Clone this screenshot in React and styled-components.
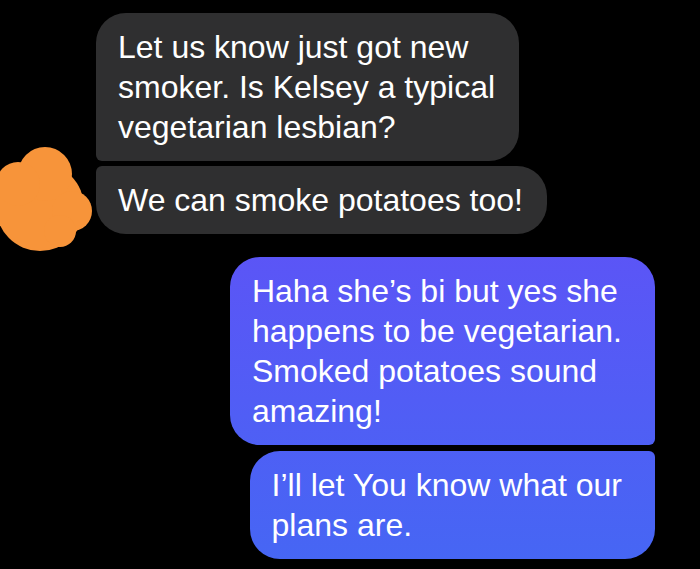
import React from "react";
import styled, { createGlobalStyle } from "styled-components";

const GlobalStyle = createGlobalStyle`
  html, body {
    margin: 0;
    padding: 0;
    background: #000;
  }
  body {
    font-family: "Liberation Sans", Arial, sans-serif;
  }
`;

const Page = styled.div`
  width: 700px;
  height: 569px;
  overflow: hidden;
  background: #000;
  padding: 13px 45px 0 0;
  box-sizing: border-box;
  display: flex;
  flex-direction: column;
`;

const IncomingGroup = styled.div`
  display: flex;
  align-items: flex-end;
`;

const Avatar = styled.div`
  flex: none;
  width: 96px;
  height: 108px;
  margin-bottom: -19px;
  svg {
    display: block;
  }
`;

const Stack = styled.div`
  display: flex;
  flex-direction: column;
  align-items: ${(props) => (props.$out ? "flex-end" : "flex-start")};
  gap: ${(props) => (props.$out ? "6px" : "5px")};
  margin-top: ${(props) => (props.$out ? "23px" : "0")};
`;

const Bubble = styled.div`
  width: fit-content;
  box-sizing: border-box;
  padding: ${(props) =>
    props.$out ? "14px 33px 14px 22px" : "14px 24px 14px 22px"};
  border-radius: ${(props) => props.$radius};
  background: ${(props) =>
    props.$out
      ? "linear-gradient(180deg, #5b55f6 255px, #4666f4 560px) fixed"
      : "#2f2f30"};
  color: #fff;
  font-size: 32px;
  line-height: 40px;
  white-space: pre-line;
`;

// orange scribble covering the avatar
const Blob = () => (
  <svg width="96" height="108" viewBox="0 0 96 108">
    <g fill="#f7943a">
      <circle cx="40" cy="62" r="44" />
      <circle cx="45" cy="29" r="27" />
      <circle cx="18" cy="39" r="22" />
      <circle cx="72" cy="66" r="20" />
      <circle cx="60" cy="86" r="16" />
    </g>
  </svg>
);

const App = () => (
  <>
    <GlobalStyle />
    <Page>
      <IncomingGroup>
        <Avatar>
          <Blob />
        </Avatar>
        <Stack>
          <Bubble $radius="30px 30px 30px 6px">
            {"Let us know just got new\nsmoker. Is Kelsey a typical\nvegetarian lesbian?"}
          </Bubble>
          <Bubble $radius="6px 30px 30px 30px">We can smoke potatoes too!</Bubble>
        </Stack>
      </IncomingGroup>
      <Stack $out>
        <Bubble $out $radius="30px 30px 6px 30px">
          {"Haha she’s bi but yes she\nhappens to be vegetarian.\nSmoked potatoes sound\namazing!"}
        </Bubble>
        <Bubble $out $radius="30px 6px 30px 30px">
          {"I’ll let You know what our\nplans are."}
        </Bubble>
      </Stack>
    </Page>
  </>
);

export default App;
